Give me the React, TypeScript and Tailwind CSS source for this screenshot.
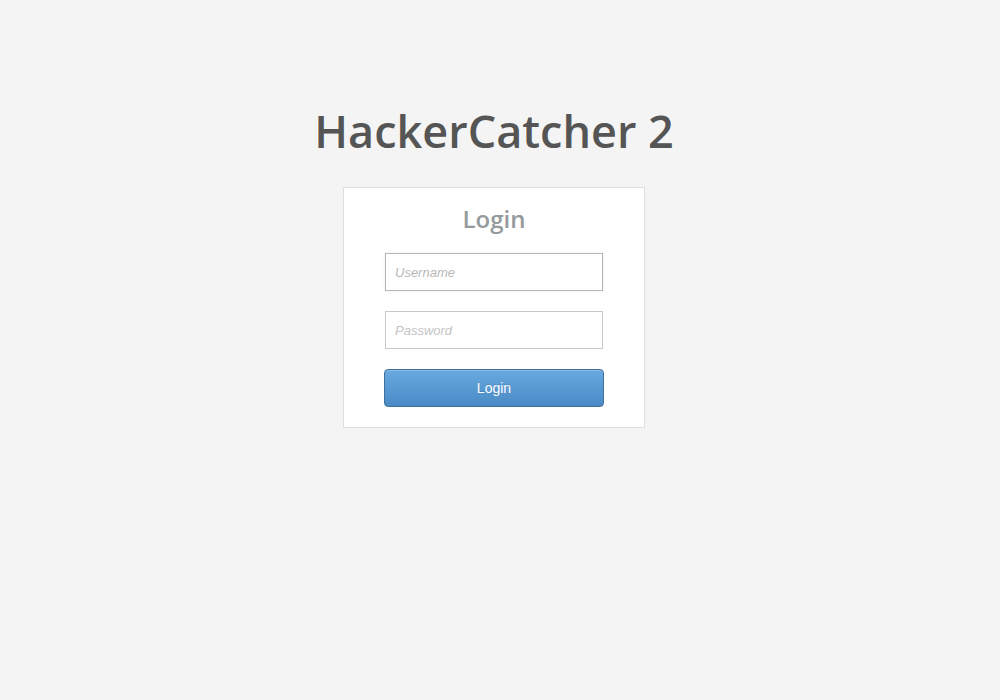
export default function App() {
    return (
        <div className="min-h-[700px] bg-[#f4f4f4] pr-[12px] flex flex-col items-center" style={{ fontFamily: '"Open Sans", sans-serif' }}>
            {/* Title */}
            <h1 className="mt-[100px] text-[45px] leading-[62px] font-semibold text-[#555555]">HackerCatcher 2</h1>

            {/* Login box */}
            <div className="mt-[25px] w-[302px] bg-white border border-[#dedede] pt-[14px] pb-[20px] flex flex-col items-center">
                <h2 className="text-[24px] leading-[33px] font-semibold text-[#959a9d]">Login</h2>

                <form className="mt-[18px] flex flex-col items-center gap-[20px]" onSubmit={(e) => e.preventDefault()}>
                    <input
                        type="text"
                        placeholder="Username"
                        className="w-[218px] h-[38px] border border-[#b5b5b5] bg-white px-[9px] text-[13px] italic text-[#555] placeholder:text-[#b8b8b8] shadow-[0_0_3px_rgba(0,0,0,0.08)] outline-none font-['Liberation_Sans',Arial,sans-serif]"
                    />
                    <input
                        type="password"
                        placeholder="Password"
                        className="w-[218px] h-[38px] border border-[#c8c8c8] bg-white px-[9px] text-[13px] italic text-[#555] placeholder:text-[#c4c4c4] outline-none font-['Liberation_Sans',Arial,sans-serif]"
                    />
                    <button
                        type="submit"
                        className="w-[220px] h-[38px] rounded-[4px] border border-[#3f6f9c] bg-gradient-to-b from-[#68a9e1] to-[#4a8bc6] text-white text-[14px] font-['Liberation_Sans',Arial,sans-serif] [text-shadow:0_-1px_0_rgba(0,0,0,0.15)] shadow-[inset_0_1px_0_rgba(255,255,255,0.2)]"
                    >
                        Login
                    </button>
                </form>
            </div>
        </div>
    );
}
